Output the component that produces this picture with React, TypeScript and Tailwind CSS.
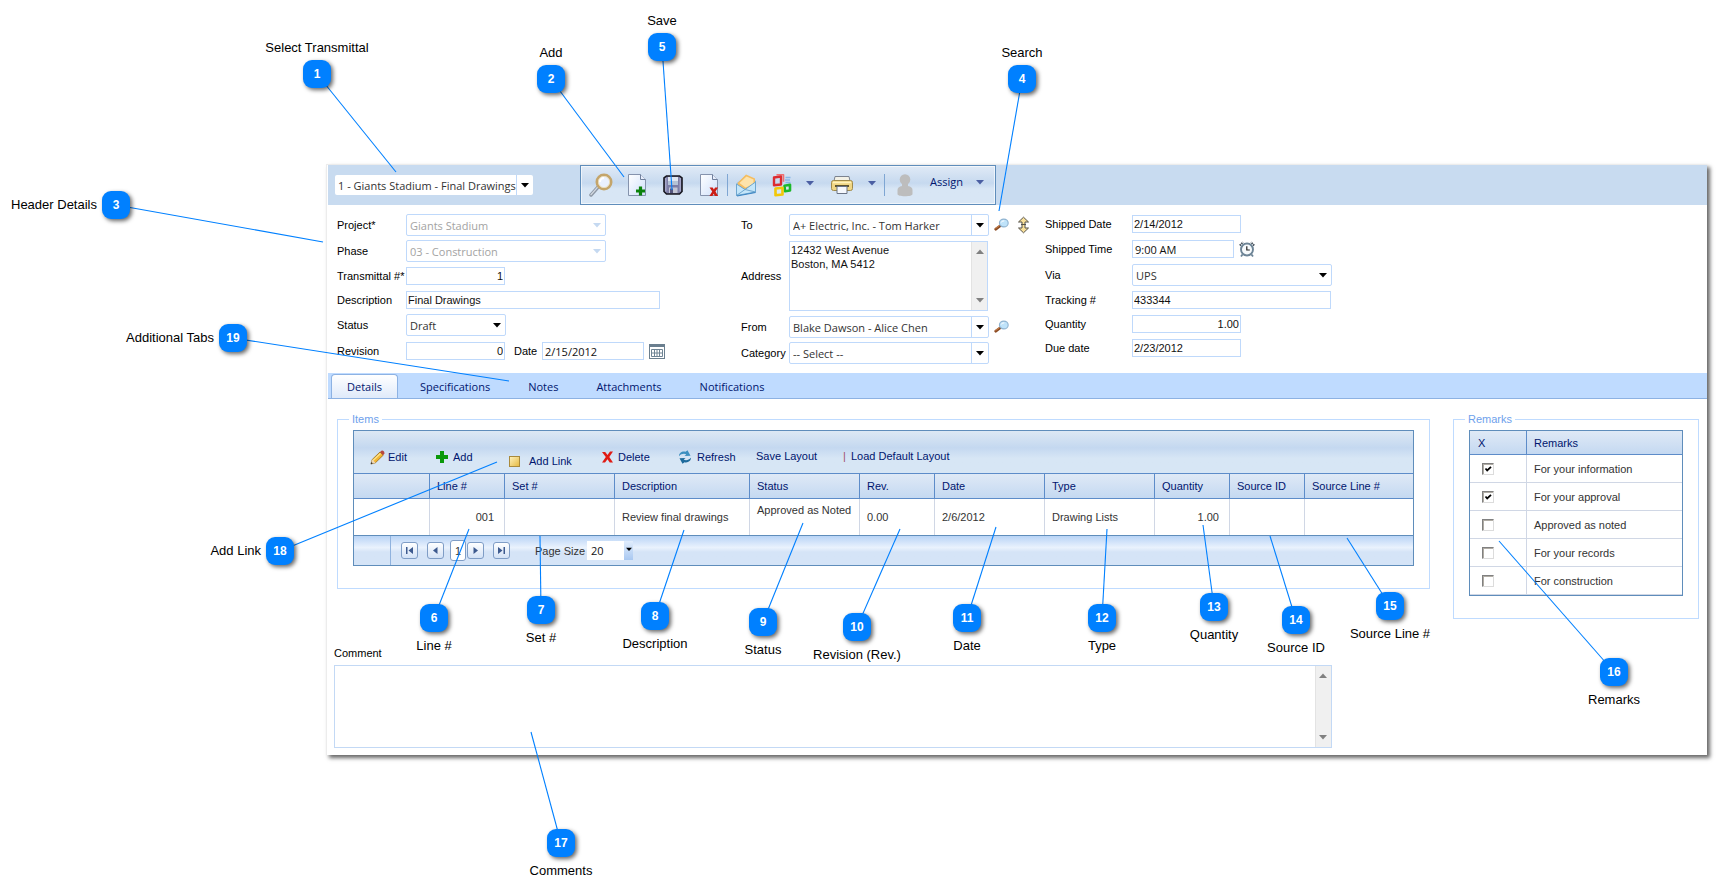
import React, { useState } from "react";

type IconProps = { className?: string };

const box = "border border-[#bfd9fb] bg-white text-[11px] text-[#111] outline-none";
const humanist = "font-['Open_Sans','Noto_Sans',sans-serif]";

/* ---------- icons ---------- */

function Caret({ className = "fill-black" }: IconProps) {
  return (
    <svg width="8" height="5" viewBox="0 0 8 5" className={className} aria-hidden="true">
      <path d="M0 0h8L4 4.6z" />
    </svg>
  );
}

function ZoomIcon() {
  return (
    <svg width="24" height="24" viewBox="0 0 24 24" aria-hidden="true">
      <path d="M2 22l8-9" stroke="#8d97a5" strokeWidth="3.4" strokeLinecap="round" />
      <path d="M2 21.600l8-9" stroke="#d4dae2" strokeWidth="1.400" strokeLinecap="round" />
      <circle cx="15" cy="9" r="7.200" fill="#eaf1ff" stroke="#c4a56b" strokeWidth="2.600" />
      <circle cx="15" cy="9" r="5.600" fill="none" stroke="#ecd9ac" strokeWidth=".8" />
      <path d="M11 9a4 4 0 0 1 4-4" stroke="#fff" strokeWidth="2" fill="none" />
    </svg>
  );
}

function PageIcon({ kind }: { kind: "add" | "delete" }) {
  return (
    <svg width="20" height="24" viewBox="0 0 20 24" aria-hidden="true">
      <defs>
        <linearGradient id={"pg-" + kind} x1="0" y1="0" x2="1" y2="1">
          <stop offset="0" stopColor="#fff" />
          <stop offset="1" stopColor="#cfe0fb" />
        </linearGradient>
      </defs>
      <path d="M1.500 1.500h12l5 5v16h-17z" fill={"url(#pg-" + kind + ")"} stroke="#8593ad" />
      <path d="M13.500 1.500v5h5" fill="#e7eefc" stroke="#6f7f9c" />
      {kind === "add" ? (
        <path d="M13.500 13.500v9M9 18h9" stroke="#0b820b" strokeWidth="3.200" />
      ) : (
        <path d="M10.500 14.500h3.200l1.200 2 1.200-2h3l-2.600 4 2.600 4.500h-3.200l-1.200-2.200-1.300 2.200h-3l2.800-4.500z" fill="#cc1d14" />
      )}
    </svg>
  );
}

function DiskIcon() {
  return (
    <svg width="20" height="20" viewBox="0 0 20 20" aria-hidden="true">
      <path d="M3.500 1h13L19 3v13.500L16.500 19h-13L1 16.500V3z" fill="#7d7ea6" stroke="#17171f" strokeWidth="1.600" />
      <path d="M2.800 3v13.500M17.200 3v13.500" stroke="#b0b1d2" strokeWidth="1.200" />
      <path d="M5 2h10v8H5z" fill="#dfe6f0" />
      <path d="M5 6h10v4H5z" fill="#b4c3d6" />
      <path d="M6 12.500h8.500V18H6z" fill="#c3c6d4" />
      <path d="M7 13.500h3V18H7z" fill="#55567e" />
    </svg>
  );
}

function MailIcon() {
  return (
    <svg width="22" height="24" viewBox="0 0 22 24" aria-hidden="true">
      <path d="M1.500 11L11 3l9.500 5v11L1.500 22.500z" fill="#9fd0f1" stroke="#7fb2d6" />
      <path d="M2.500 10L11 1.500l9 4v7l-9 4-8-3z" fill="#f5bd60" />
      <path d="M4.500 10l7-6.500 7 3v5l-8 3z" fill="#fde3ab" />
      <path d="M1.500 11l8.500 5.500L20.500 9v10L1.500 22.500z" fill="#c4e6fa" stroke="#6ea6cf" />
      <path d="M1.500 22.500l8.500-6 10.500 2.500" fill="none" stroke="#6ea6cf" />
      <path d="M2 23l18.500-3.500" stroke="#3f87c4" strokeWidth="1.200" />
    </svg>
  );
}

function OfficeIcon() {
  return (
    <svg width="22" height="24" viewBox="0 0 22 24" fill="none" strokeLinejoin="round" aria-hidden="true">
      <path d="M5.500 1.800h7v7" stroke="#ef6f70" strokeWidth="1.600" />
      <path d="M3 4.500l7-1v8l-7 .8z" stroke="#dc2b30" strokeWidth="2.400" />
      <path d="M14.500 4.500h5M14 7h5M14.500 9.500h5" stroke="#86b8e8" strokeWidth="1.500" />
      <path d="M13.500 12.800l5.500-1v5.700l-5 .8z" stroke="#1cb82a" strokeWidth="2.600" />
      <path d="M4.500 15.500l7-.8v6.800l-7 .8z" stroke="#f2c808" strokeWidth="2.600" />
    </svg>
  );
}

function PrinterIcon() {
  return (
    <svg width="24" height="20" viewBox="0 0 24 20" aria-hidden="true">
      <path d="M5 1.500h14l1 4.500H4z" fill="#f3f1e6" stroke="#7c838f" />
      <rect x="1.500" y="5.500" width="21" height="10" rx="2" fill="#f0d683" stroke="#a08a4c" />
      <path d="M3 7.500h18" stroke="#fff2bd" strokeWidth="1.500" />
      <path d="M5 11h14" stroke="#4c4427" strokeWidth="1.800" />
      <path d="M7 11.500h10v7H7z" fill="#f5f8fd" stroke="#6a7486" />
    </svg>
  );
}

function PersonIcon() {
  return (
    <svg width="18" height="24" viewBox="0 0 18 24" fill="#bdbdbd" aria-hidden="true">
      <circle cx="9" cy="6.500" r="5.300" />
      <path d="M6 10h6v3c3 .5 4.500 2 4.500 4v4c0 1.500-3 2.200-7.500 2.200S1.500 22.500 1.500 21v-4c0-2 1.500-3.500 4.500-4z" />
    </svg>
  );
}

function LookupIcon() {
  return (
    <svg width="15" height="14" viewBox="0 0 15 14" aria-hidden="true">
      <path d="M1.800 11.200L6 8" stroke="#8a4a22" strokeWidth="2.800" strokeLinecap="round" />
      <path d="M1.500 10.600l4-3.100" stroke="#d58a52" strokeWidth="1" />
      <ellipse cx="9.800" cy="5" rx="4.400" ry="3.900" fill="#bfe3fa" stroke="#8fb3d0" strokeWidth="1.100" />
      <path d="M7.300 4.500a2.600 2 0 0 1 3-1.600" stroke="#fff" fill="none" />
    </svg>
  );
}

function UpDownIcon() {
  return (
    <svg width="13" height="18" viewBox="0 0 13 18" aria-hidden="true">
      <path d="M6.500 1.200L11.500 6H8v6h3.500l-5 4.800L1.500 12H5V6H1.500z" fill="#fbe29a" stroke="#55524a" strokeLinejoin="round" />
      <path d="M4 8.500h5" stroke="#55524a" />
    </svg>
  );
}

function ClockIcon() {
  return (
    <svg width="16" height="17" viewBox="0 0 16 17" aria-hidden="true">
      <path d="M.8 4.500L4 1.200M15.200 4.500L12 1.200" stroke="#3e4a56" strokeWidth="1.800" strokeDasharray="1.500 .7" />
      <path d="M3.500 13.500l-1.500 2M12.500 13.500l1.500 2" stroke="#6d8496" strokeWidth="1.800" />
      <circle cx="8" cy="8.500" r="6" fill="#f7fafc" stroke="#6d8496" strokeWidth="1.900" />
      <path d="M7.800 5.200v3.800h3" fill="none" stroke="#222" strokeWidth="1.200" />
    </svg>
  );
}

function CalendarIcon() {
  return (
    <svg width="16" height="15" viewBox="0 0 16 15" aria-hidden="true">
      <rect x=".5" y=".5" width="15" height="14" fill="#fff" stroke="#6b7f8f" />
      <path d="M1 2h14" stroke="#6b7f8f" strokeWidth="2" />
      <path d="M2.500 5.500h11v7h-11zM2.500 9h11M5.500 5.500v7M8 5.500v7M10.500 5.500v7" fill="none" stroke="#6f8494" />
    </svg>
  );
}

function PencilIcon() {
  return (
    <svg width="15" height="15" viewBox="0 0 15 15" aria-hidden="true">
      <path d="M1 14l1.200-4.500L10 2l3.200 3.200-7.700 7.500z" fill="#f2b632" stroke="#9a6a1b" strokeWidth=".8" />
      <path d="M3 10.500l7.500-7" stroke="#fbe38a" strokeWidth="1.400" />
      <path d="M10 2l1.500-1.300c1.500-.5 3 .8 2.900 2.500L13.200 5.200z" fill="#b8473f" />
      <path d="M1 14l1.200-4.500 3.300 3.200z" fill="#ecd7b8" />
      <path d="M.7 14.300l.7-2.200 1.500 1.500z" fill="#333" />
    </svg>
  );
}

function PlusIcon() {
  return (
    <svg width="12" height="12" viewBox="0 0 12 12" aria-hidden="true">
      <path d="M4 0h4v4h4v4H8v4H4V8H0V4h4z" fill="#0a990a" />
    </svg>
  );
}

function NoteIcon() {
  return (
    <svg width="11" height="11" viewBox="0 0 11 11" aria-hidden="true">
      <defs>
        <linearGradient id="note" x1="0" y1="0" x2="1" y2="1">
          <stop offset="0" stopColor="#fff3bf" />
          <stop offset="1" stopColor="#e5b83e" />
        </linearGradient>
      </defs>
      <rect x=".5" y=".5" width="10" height="10" fill="url(#note)" stroke="#a98a3c" />
    </svg>
  );
}

function CrossIcon() {
  return (
    <svg width="11" height="12" viewBox="0 0 11 12" aria-hidden="true">
      <path d="M0 1h3.200l2.300 3L8 .5h3L7.300 6l3.700 5.500H7.700L5.500 8.200 3 11.500H0L3.800 6z" fill="#e01b14" />
    </svg>
  );
}

function RefreshIcon() {
  return (
    <svg width="14" height="14" viewBox="0 0 14 14" aria-hidden="true">
      <path d="M1 6.200C1 3 4 1 7.500 1.800L9.500.2 12.500 5.800 6.500 6l1.800-1.600C6 3.200 3 4 1 6.200z" fill="#3c8fc0" />
      <path d="M13 7.800c0 3.200-3 5.200-6.500 4.400L4.500 13.800 1.500 8.200 7.500 8 5.700 9.600c2.300 1.200 5.300.4 7.300-1.800z" fill="#1d6a9c" />
    </svg>
  );
}

/* ---------- form parts ---------- */

type ComboProps = {
  id: string;
  value: string;
  label?: string;
  split?: boolean;
  disabled?: boolean;
  width: string;
  frame?: string;
};

function Combo({ id, value, label, split, disabled, width, frame = "h-[22px] rounded-[2px] border border-[#bfd9fb]" }: ComboProps) {
  return (
    <div className={`grid shrink-0 overflow-hidden bg-white ${width} ${frame}`}>
      <select
        id={id}
        aria-label={label}
        disabled={disabled}
        className={`${humanist} col-start-1 row-start-1 w-full min-w-0 appearance-none bg-transparent pl-[3px] pr-4 pt-0.5 text-[11px] outline-none ${
          disabled ? "text-[#a3a3a3] opacity-100" : "text-[#333]"
        }`}
      >
        <option>{value}</option>
      </select>
      <span
        className={`pointer-events-none col-start-1 row-start-1 flex w-[17px] items-center justify-center justify-self-end ${
          split ? "border-l border-[#bfd9fb]" : ""
        }`}
      >
        <Caret className={disabled ? "fill-[#c5d9f1]" : "fill-black"} />
      </span>
    </div>
  );
}

function Row({ id, label, labelWidth, height, children }: { id: string; label: string; labelWidth: string; height: string; children: React.ReactNode }) {
  return (
    <div className={`flex items-center ${height}`}>
      <label htmlFor={id} className={`shrink-0 whitespace-nowrap ${labelWidth}`}>
        {label}
      </label>
      {children}
    </div>
  );
}

function TextBox({ id, value, width, className = "" }: { id: string; value: string; width: string; className?: string }) {
  return <input id={id} defaultValue={value} className={`${box} h-[18px] min-w-0 px-px ${width} ${className}`} />;
}

function ScrollTrack() {
  return (
    <div className="flex w-4 shrink-0 flex-col items-center justify-between border-l border-[#e3e3e3] bg-[#f0f0f0] py-[7px]">
      <Caret className="rotate-180 fill-[#808080]" />
      <Caret className="fill-[#808080]" />
    </div>
  );
}

function IconButton({ label, width, children }: { label: string; width: string; children: React.ReactNode }) {
  return (
    <button type="button" aria-label={label} className={`flex h-full items-center justify-center ${width}`}>
      {children}
    </button>
  );
}

/* ---------- sections ---------- */

function TopBar() {
  return (
    <div className="flex h-10 items-stretch bg-[#c8dbf0]">
      <div className="flex w-[252px] shrink-0 items-center pl-[7px]">
        <Combo id="transmittal" label="Select Transmittal" value="1 - Giants Stadium - Final Drawings" split width="w-[198px]" frame="h-5 rounded-[2px]" />
      </div>
      <div
        className={`${humanist} flex w-[416px] items-stretch border border-[#5f8dbb] bg-linear-to-b from-[#e0eaf6] from-0% via-[#c6d9ef] via-45% to-[#d8e6f5] to-60% pl-[2px] text-[11px] text-[#00156e] ring-1 ring-white/60 ring-inset`}
      >
        <IconButton label="Find" width="w-9"><ZoomIcon /></IconButton>
        <IconButton label="Add" width="w-9"><PageIcon kind="add" /></IconButton>
        <IconButton label="Save" width="w-9"><DiskIcon /></IconButton>
        <IconButton label="Delete" width="w-9"><PageIcon kind="delete" /></IconButton>
        <span className="my-2 w-px bg-[#7fa6d3]" />
        <IconButton label="Mail" width="w-9"><MailIcon /></IconButton>
        <IconButton label="Export" width="w-9"><OfficeIcon /></IconButton>
        <IconButton label="Export options" width="w-5"><Caret className="mb-1 fill-[#4b5fa3]" /></IconButton>
        <IconButton label="Print" width="w-11"><PrinterIcon /></IconButton>
        <IconButton label="Print options" width="w-4"><Caret className="mb-1 fill-[#4b5fa3]" /></IconButton>
        <span className="my-2 ml-1 w-px bg-[#7fa6d3]" />
        <IconButton label="User" width="w-10"><PersonIcon /></IconButton>
        <button type="button" className="flex items-center gap-[13px] pb-1.5 pl-[5px]">
          Assign
          <Caret className="fill-[#4b5fa3]" />
        </button>
      </div>
    </div>
  );
}

function HeaderForm() {
  return (
    <div className="flex h-[168px] pl-[9px] pt-[7px]">
      <div className="w-[404px] shrink-0">
        <Row id="project" label="Project*" labelWidth="w-[69px]" height="h-[26px]">
          <Combo id="project" value="Giants Stadium" disabled width="w-[200px]" />
        </Row>
        <Row id="phase" label="Phase" labelWidth="w-[69px]" height="h-[26px]">
          <Combo id="phase" value="03 - Construction" disabled width="w-[200px]" />
        </Row>
        <Row id="number" label="Transmittal #*" labelWidth="w-[69px]" height="h-6">
          <TextBox id="number" value="1" width="w-[99px]" className="text-right" />
        </Row>
        <Row id="description" label="Description" labelWidth="w-[69px]" height="h-6">
          <TextBox id="description" value="Final Drawings" width="w-[254px]" />
        </Row>
        <Row id="status" label="Status" labelWidth="w-[69px]" height="h-[26px]">
          <Combo id="status" value="Draft" width="w-[100px]" />
        </Row>
        <Row id="revision" label="Revision" labelWidth="w-[69px]" height="h-[26px]">
          <TextBox id="revision" value="0" width="w-[99px]" className="text-right" />
          <label htmlFor="date" className="ml-[9px] w-7">Date</label>
          <TextBox id="date" value="2/15/2012" width="w-[102px]" className={`${humanist} pl-[2px]`} />
          <button type="button" aria-label="Pick date" className="ml-[5px]"><CalendarIcon /></button>
        </Row>
      </div>

      <div className="w-[304px] shrink-0">
        <Row id="to" label="To" labelWidth="w-12" height="h-[26px]">
          <Combo id="to" value="A+ Electric, Inc. - Tom Harker" split width="w-[200px]" />
          <button type="button" aria-label="Search recipient" className="ml-[5px]"><LookupIcon /></button>
          <button type="button" aria-label="Swap" className="ml-2"><UpDownIcon /></button>
        </Row>
        <Row id="address" label="Address" labelWidth="w-12" height="h-[76px]">
          <div className="flex h-[70px] w-[199px] border border-[#bfd9fb]">
            <textarea
              id="address"
              defaultValue={"12432 West Avenue\nBoston, MA 5412"}
              className="min-w-0 flex-1 resize-none overflow-hidden px-px pt-px text-[11px] leading-[14px] text-[#111] outline-none"
            />
            <ScrollTrack />
          </div>
        </Row>
        <Row id="from" label="From" labelWidth="w-12" height="h-[26px]">
          <Combo id="from" value="Blake Dawson - Alice Chen" split width="w-[200px]" />
          <button type="button" aria-label="Search sender" className="ml-[5px]"><LookupIcon /></button>
        </Row>
        <Row id="category" label="Category" labelWidth="w-12" height="h-[26px]">
          <Combo id="category" value="-- Select --" split width="w-[200px]" />
        </Row>
      </div>

      <div className="shrink-0">
        <Row id="shipdate" label="Shipped Date" labelWidth="w-[87px]" height="h-6">
          <TextBox id="shipdate" value="2/14/2012" width="w-[109px]" />
        </Row>
        <Row id="shiptime" label="Shipped Time" labelWidth="w-[87px]" height="h-[26px]">
          <TextBox id="shiptime" value="9:00 AM" width="w-[102px]" className={`${humanist} pl-[2px]`} />
          <button type="button" aria-label="Pick time" className="ml-[5px]"><ClockIcon /></button>
        </Row>
        <Row id="via" label="Via" labelWidth="w-[87px]" height="h-[26px]">
          <Combo id="via" value="UPS" width="w-[200px]" />
        </Row>
        <Row id="tracking" label="Tracking #" labelWidth="w-[87px]" height="h-6">
          <TextBox id="tracking" value="433344" width="w-[199px]" />
        </Row>
        <Row id="quantity" label="Quantity" labelWidth="w-[87px]" height="h-6">
          <TextBox id="quantity" value="1.00" width="w-[109px]" className="text-right" />
        </Row>
        <Row id="due" label="Due date" labelWidth="w-[87px]" height="h-6">
          <TextBox id="due" value="2/23/2012" width="w-[109px]" />
        </Row>
      </div>
    </div>
  );
}

const tabs = ["Details", "Specifications", "Notes", "Attachments", "Notifications"];

function Tabs() {
  const [active, setActive] = useState("Details");
  return (
    <div role="tablist" className={`${humanist} flex h-[26px] items-stretch border-b border-[#8db2e3] bg-[#bfdbff] pl-[3px] text-[11px] text-[#00156e]`}>
      {tabs.map((t) => (
        <button
          key={t}
          role="tab"
          type="button"
          aria-selected={t === active}
          onClick={() => setActive(t)}
          className={
            t === active
              ? "mr-[3px] mt-px rounded-t-[4px] border border-b-0 border-[#8db2e3] bg-linear-to-b from-white to-[#dfeafa] px-[15px]"
              : "px-[19px] pt-0.5"
          }
        >
          {t}
        </button>
      ))}
    </div>
  );
}

const headCell = "border-l border-[#5d8cc9] pl-[7px] text-left font-normal text-[#00156e] first:border-l-0";
const bodyCell = "border-l border-[#d0d7e5] pl-[7px] text-[#333] first:border-l-0";

const columns = [
  { name: "", width: "w-[75px]", value: "", cell: "" },
  { name: "Line #", width: "w-[75px]", value: "001", cell: "pr-[10px] text-right" },
  { name: "Set #", width: "w-[110px]", value: "", cell: "" },
  { name: "Description", width: "w-[135px]", value: "Review final drawings", cell: "" },
  { name: "Status", width: "w-[110px]", value: "Approved as Noted", cell: "pt-1 align-top" },
  { name: "Rev.", width: "w-[75px]", value: "0.00", cell: "" },
  { name: "Date", width: "w-[110px]", value: "2/6/2012", cell: "" },
  { name: "Type", width: "w-[110px]", value: "Drawing Lists", cell: "" },
  { name: "Quantity", width: "w-[75px]", value: "1.00", cell: "pr-[10px] text-right" },
  { name: "Source ID", width: "w-[75px]", value: "", cell: "" },
  { name: "Source Line #", width: "", value: "", cell: "" },
];

function PagerButton({ label, path, className }: { label: string; path: string; className: string }) {
  return (
    <button
      type="button"
      aria-label={label}
      className={`flex h-[17px] w-[17px] items-center justify-center rounded-[3px] border border-[#7f9dc6] bg-linear-to-b from-white to-[#d3e2f6] ${className}`}
    >
      <svg width="9" height="9" viewBox="0 0 9 9" className="fill-[#3d5a8f]" aria-hidden="true">
        <path d={path} />
      </svg>
    </button>
  );
}

function ItemsGrid() {
  return (
    <fieldset className="min-w-0 flex-1 border border-[#bfdbff] px-[15px] pb-[22px] pt-[3px]">
      <legend className="-ml-1 h-4 px-[3px] leading-4 text-[#6ea1ec]">Items</legend>
      <div className="border border-[#5f8dbb]">
        <div className="flex h-[43px] items-center border-b border-[#5d8cc9] bg-linear-to-b from-[#dde8f4] from-0% via-[#c4d8f0] via-40% to-[#d7e6f5] to-65% pl-4 pt-2.5 text-[#00156e]">
          <button type="button" className="flex w-[66px] items-center gap-[3px]"><PencilIcon />Edit</button>
          <button type="button" className="flex w-[73px] items-center gap-[5px]"><PlusIcon />Add</button>
          <button type="button" className="flex w-[93px] items-center gap-[9px] pt-2"><NoteIcon />Add Link</button>
          <button type="button" className="flex w-[76px] items-center gap-[5px]"><CrossIcon />Delete</button>
          <button type="button" className="flex w-[78px] items-center gap-[5px]"><RefreshIcon />Refresh</button>
          <button type="button" className="w-[87px] pb-0.5 text-left">Save Layout</button>
          <span className="w-2 pb-0.5 text-[#a14f6d]">|</span>
          <button type="button" className="pb-0.5">Load Default Layout</button>
        </div>
        <table className="w-full table-fixed border-separate border-spacing-0">
          <thead>
            <tr className="h-[25px] bg-linear-to-b from-[#dfe9f6] to-[#c3d8f1]">
              {columns.map((c, i) => (
                <th key={i} scope="col" className={`${headCell} border-b ${c.width}`}>{c.name}</th>
              ))}
            </tr>
          </thead>
          <tbody>
            <tr className="h-9">
              {columns.map((c, i) => (
                <td key={i} className={`${bodyCell} whitespace-nowrap ${c.cell}`}>{c.value}</td>
              ))}
            </tr>
          </tbody>
        </table>
        <div className="flex h-[30px] items-center border-t border-[#5f8dbb] bg-linear-to-b from-[#b9d4f6] from-0% via-[#eaf2fd] via-40% to-[#d5e4f7] to-55% text-[#333]">
          <span className="h-full w-[37px] border-r border-[#8fb2de]" />
          <PagerButton label="First page" className="ml-2.5" path="M1 1h1.500v7H1zM8 1v7L3.500 4.500z" />
          <PagerButton label="Previous page" className="ml-[9px]" path="M6.500 1v7L2 4.500z" />
          <button type="button" className="ml-[6px] h-[21px] w-4 rounded-[3px] border border-[#7f9dc6] bg-white">1</button>
          <PagerButton label="Next page" className="ml-px" path="M2.500 1v7L7 4.500z" />
          <PagerButton label="Last page" className="ml-[9px]" path="M1 1v7l4.500-3.500zM6.500 1H8v7H6.500z" />
          <label htmlFor="pagesize" className="ml-[25px] w-[52px]">Page Size</label>
          <input id="pagesize" defaultValue="20" className={`${humanist} h-[19px] w-[37px] bg-white pl-1 text-[11px] text-[#111] outline-none`} />
          <span className="flex h-[19px] w-[9px] items-start justify-center bg-linear-to-b from-[#e1edfc] to-[#a9c8f1] pt-1.5">
            <Caret className="w-[6px] fill-black" />
          </span>
        </div>
      </div>
    </fieldset>
  );
}

const remarks = [
  { text: "For your information", on: true },
  { text: "For your approval", on: true },
  { text: "Approved as noted", on: false },
  { text: "For your records", on: false },
  { text: "For construction", on: false },
];

function Remarks() {
  return (
    <fieldset className="w-[244px] shrink-0 border border-[#bfdbff] px-[15px] pb-[22px] pt-[3px]">
      <legend className="-ml-1 h-4 px-[3px] leading-4 text-[#6ea1ec]">Remarks</legend>
      <table className="w-[214px] table-fixed border-separate border-spacing-0 border border-[#5f8dbb]">
        <thead>
          <tr className="h-[24px] bg-linear-to-b from-[#dfe9f6] to-[#c3d8f1] text-left text-[#00156e]">
            <th scope="col" className="w-[56px] border-b border-[#5d8cc9] pl-2 font-normal">X</th>
            <th scope="col" className="border-b border-l border-[#5d8cc9] pl-[7px] font-normal">Remarks</th>
          </tr>
        </thead>
        <tbody>
          {remarks.map((r, i) => (
            <tr key={r.text} className="h-7">
              <td className="border-b border-[#d0d7e5] pl-3">
                <span className="grid size-3">
                  <input
                    id={`remark-${i}`}
                    type="checkbox"
                    defaultChecked={r.on}
                    className="peer col-start-1 row-start-1 size-3 appearance-none border border-b-[#dcdcdc] border-l-[#808080] border-r-[#dcdcdc] border-t-[#808080] bg-white shadow-[inset_1px_1px_0_#b0aca4]"
                  />
                  <svg viewBox="0 0 12 12" className="pointer-events-none invisible col-start-1 row-start-1 size-3 peer-checked:visible" aria-hidden="true">
                    <path d="M3.500 5.500L5.200 7.500 9 3.800" fill="none" stroke="#000" strokeWidth="1.800" />
                  </svg>
                </span>
              </td>
              <td className="border-b border-l border-[#d0d7e5] pl-[7px] text-[#333]">
                <label htmlFor={`remark-${i}`}>{r.text}</label>
              </td>
            </tr>
          ))}
        </tbody>
      </table>
    </fieldset>
  );
}

/* ---------- callouts ---------- */

type Side = "above" | "below" | "left";
type Callout = { n: number; text: string; x: number; y: number; tx: number; ty: number; side: Side };

const callouts: Callout[] = [
  { n: 1, text: "Select Transmittal", x: 317, y: 74, tx: 396, ty: 172, side: "above" },
  { n: 2, text: "Add", x: 551, y: 79, tx: 624, ty: 177, side: "above" },
  { n: 3, text: "Header Details", x: 116, y: 205, tx: 323, ty: 242, side: "left" },
  { n: 4, text: "Search", x: 1022, y: 79, tx: 999, ty: 211, side: "above" },
  { n: 5, text: "Save", x: 662, y: 47, tx: 672, ty: 190, side: "above" },
  { n: 6, text: "Line #", x: 434, y: 618, tx: 469, ty: 529, side: "below" },
  { n: 7, text: "Set #", x: 541, y: 610, tx: 540, ty: 536, side: "below" },
  { n: 8, text: "Description", x: 655, y: 616, tx: 684, ty: 530, side: "below" },
  { n: 9, text: "Status", x: 763, y: 622, tx: 803, ty: 523, side: "below" },
  { n: 10, text: "Revision (Rev.)", x: 857, y: 627, tx: 900, ty: 529, side: "below" },
  { n: 11, text: "Date", x: 967, y: 618, tx: 996, ty: 527, side: "below" },
  { n: 12, text: "Type", x: 1102, y: 618, tx: 1107, ty: 529, side: "below" },
  { n: 13, text: "Quantity", x: 1214, y: 607, tx: 1203, ty: 525, side: "below" },
  { n: 14, text: "Source ID", x: 1296, y: 620, tx: 1270, ty: 536, side: "below" },
  { n: 15, text: "Source Line #", x: 1390, y: 606, tx: 1347, ty: 538, side: "below" },
  { n: 16, text: "Remarks", x: 1614, y: 672, tx: 1499, ty: 541, side: "below" },
  { n: 17, text: "Comments", x: 561, y: 843, tx: 531, ty: 732, side: "below" },
  { n: 18, text: "Add Link", x: 280, y: 551, tx: 497, ty: 462, side: "left" },
  { n: 19, text: "Additional Tabs", x: 233, y: 338, tx: 509, ty: 381, side: "left" },
];

const sideClass: Record<Side, string> = {
  above: "bottom-full left-1/2 -translate-x-1/2 pb-1",
  below: "left-1/2 top-full -translate-x-1/2 pt-1.5",
  left: "right-full top-1/2 -translate-y-1/2 pr-[5px]",
};

function Callouts() {
  return (
    <div className="pointer-events-none absolute inset-0">
      <svg className="absolute inset-0 size-full overflow-visible" aria-hidden="true">
        {callouts.map((c) => (
          <line key={c.n} x1={c.x} y1={c.y} x2={c.tx} y2={c.ty} stroke="#0080ff" strokeWidth="1.100" />
        ))}
      </svg>
      {callouts.map((c) => (
        <div
          key={c.n}
          className="absolute flex size-7 -translate-x-1/2 -translate-y-1/2 items-center justify-center rounded-[9px] bg-[#0080ff] text-[13px] text-white shadow-[2px_2px_4px_rgba(0,0,0,0.6)]"
          style={{ left: c.x, top: c.y }}
        >
          <span className="text-xs font-bold">{c.n}</span>
          <span className={`absolute whitespace-nowrap leading-4 text-black ${sideClass[c.side]}`}>{c.text}</span>
        </div>
      ))}
    </div>
  );
}

export default function App() {
  return (
    <div className="relative min-h-screen bg-white pb-[139px] pl-[326px] pr-[9px] pt-[164px] font-['Liberation_Sans',Arial,sans-serif] text-[11px] leading-[14px] text-black">
      <main className="border-l border-t border-[#ececec] bg-white pb-[7px] pl-px shadow-[3px_3px_4px_rgba(0,0,0,0.6)]">
        <TopBar />
        <HeaderForm />
        <Tabs />
        <div className="flex items-start gap-[23px] pl-[9px] pr-2 pt-3">
          <ItemsGrid />
          <Remarks />
        </div>
        <div className="px-1.5 pt-[26px]">
          <label htmlFor="comment" className="block h-5 leading-4">Comment</label>
          <div className="flex h-[83px] w-[73%] border border-[#c3d9f5]">
            <textarea id="comment" className="min-w-0 flex-1 resize-none overflow-hidden outline-none" />
            <ScrollTrack />
          </div>
        </div>
      </main>
      <Callouts />
    </div>
  );
}
